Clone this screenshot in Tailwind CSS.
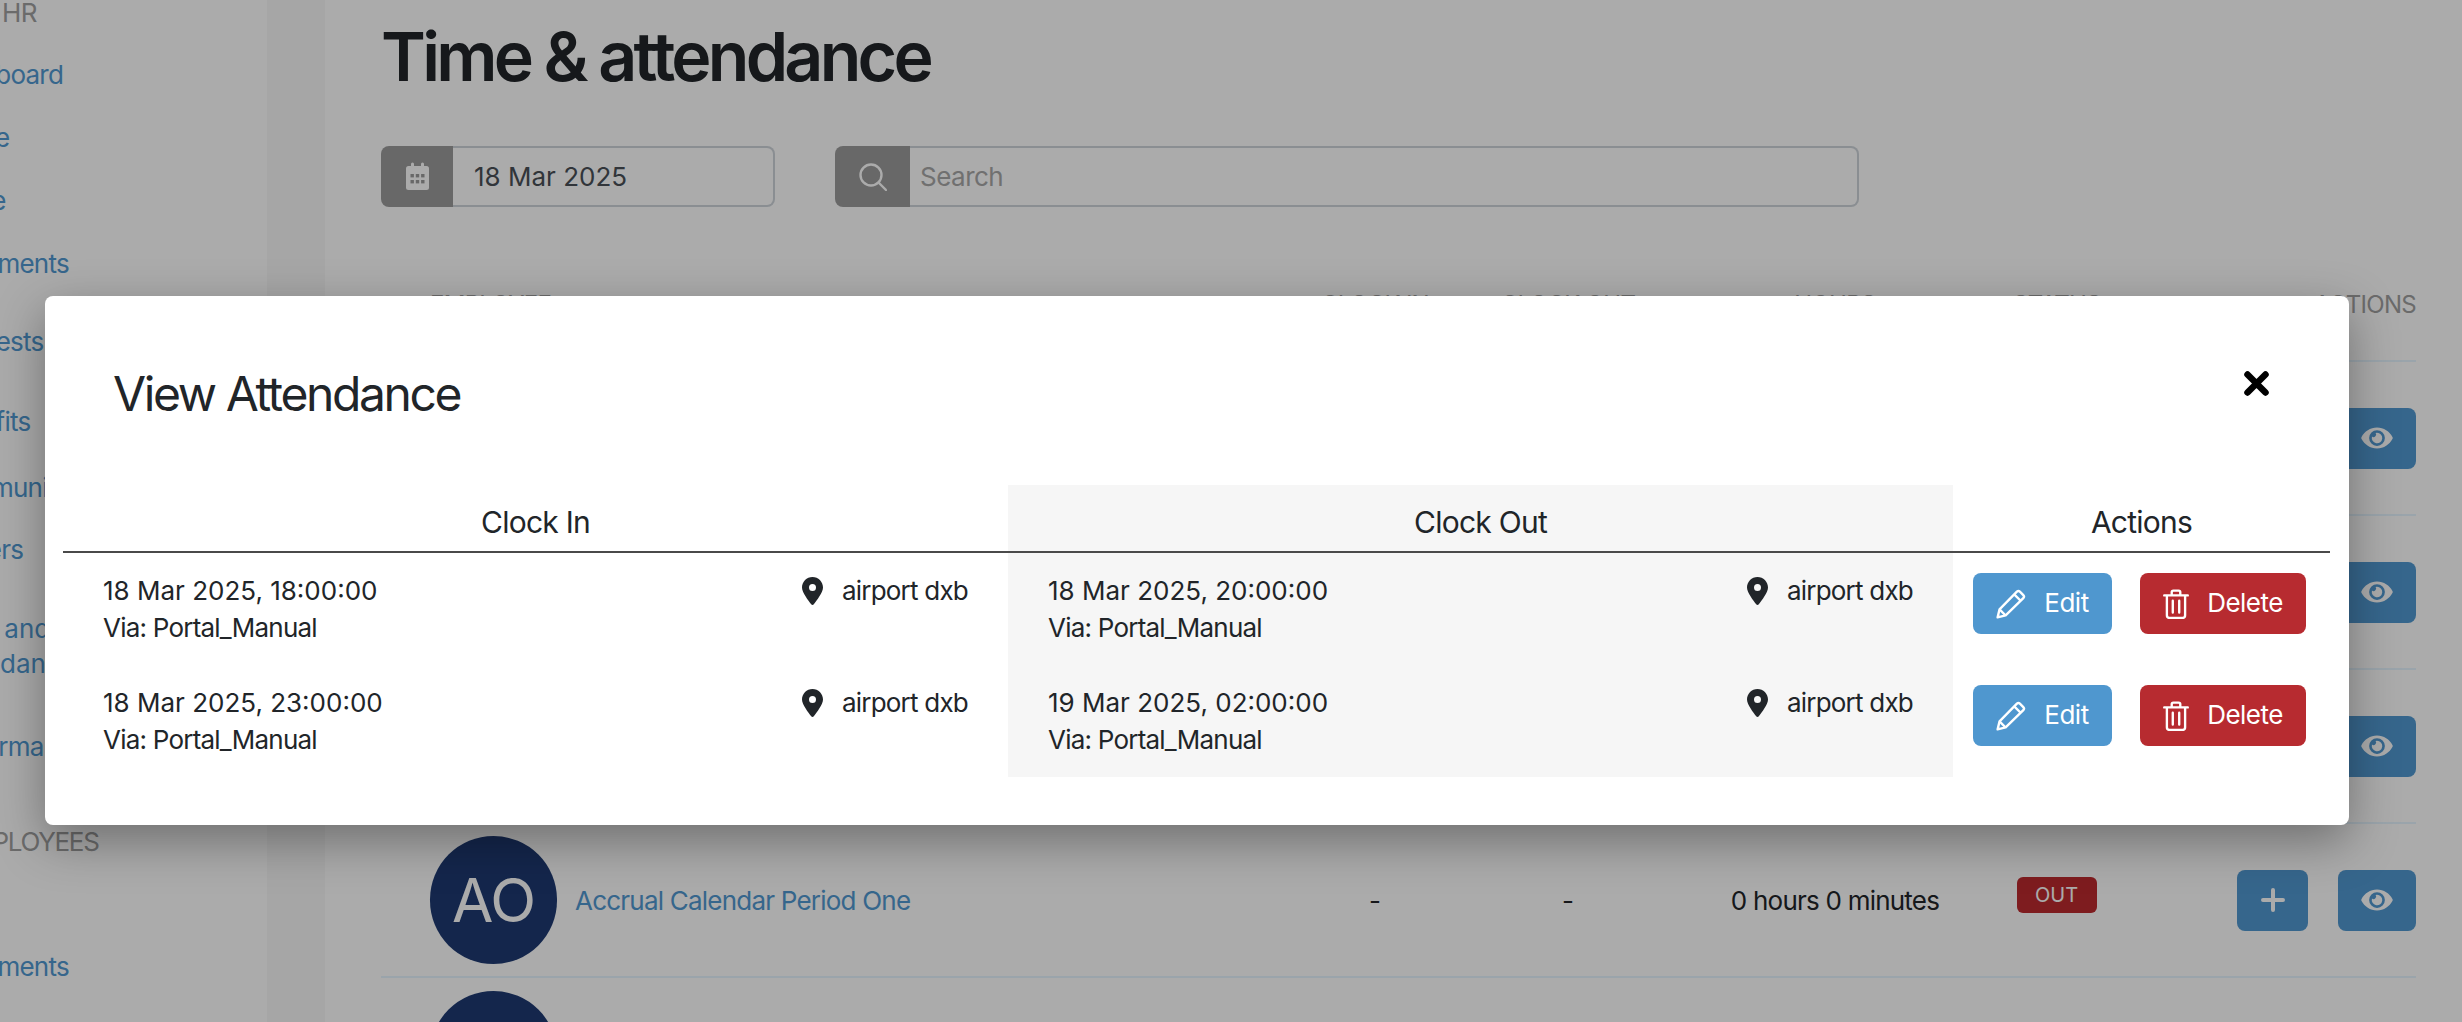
<!DOCTYPE html>
<html lang="en">
<head>
    <meta charset="UTF-8">
    <title>Time &amp; attendance</title>
    <script src="https://cdn.jsdelivr.net/npm/@tailwindcss/browser@4"></script>
</head>
<body class="w-[2462px] h-[1022px] overflow-hidden bg-white font-['Inter',sans-serif] text-[#212529]">
    <div class="flex h-[1022px] overflow-hidden">
        <!-- Sidebar, page is scrolled sideways so labels are cut off at the left -->
        <aside class="w-[267px] shrink-0 overflow-hidden bg-white">
            <div class="-ml-[64px] -mt-[3px] flex flex-col text-[26px] leading-[32px] tracking-[-0.03em] text-[#5199d1]">
                <div class="h-[62px] ml-[20px] text-[#a0a0a0]">MY HR</div>
                <a class="h-[63px]">Dashboard</a>
                <a class="h-[63px]">Profile</a>
                <a class="h-[63px]">Leave</a>
                <a class="h-[78px]">Documents</a>
                <a class="h-[80px]">Requests</a>
                <a class="h-[66px]">Benefits</a>
                <a class="h-[62px]">Communications</a>
                <a class="h-[77px]">Rosters</a>
                <a class="h-[120px] leading-[35px] tracking-normal">Time and<br>Attendance</a>
                <a class="h-[95px]">Performance</a>
                <div class="h-[125px] ml-[20px] tracking-[-0.05em] text-[#a0a0a0]">EMPLOYEES</div>
                <a>Documents</a>
            </div>
        </aside>
        <div class="w-[58px] shrink-0 bg-[#f8f8f8]"></div>

        <!-- Main -->
        <main class="w-[2035px] shrink-0 ml-[56px]">
            <h1 class="mt-[16px] text-[68px] leading-[80px] font-semibold tracking-[-0.055em] text-[#212529]">Time &amp; attendance</h1>
            <div class="mt-[50px] flex">
                <div class="flex h-[61px] w-[394px]">
                    <span class="flex w-[72px] items-center justify-center rounded-l-lg bg-[#9c9c9c]">
                        <svg class="w-[25px] h-[29px]" viewBox="0 0 25 29" fill="none"><rect x="1" y="4" width="23" height="24" rx="2.5" fill="white"/><rect x="6" y="0.5" width="3" height="6" rx="1.5" fill="white"/><rect x="16" y="0.5" width="3" height="6" rx="1.5" fill="white"/><g fill="#9c9c9c"><rect x="5.5" y="12" width="3.4" height="3.4"/><rect x="10.8" y="12" width="3.4" height="3.4"/><rect x="16.1" y="12" width="3.4" height="3.4"/><rect x="5.5" y="18" width="3.4" height="3.4"/><rect x="10.8" y="18" width="3.4" height="3.4"/><rect x="16.1" y="18" width="3.4" height="3.4"/></g></svg>
                    </span>
                    <div class="flex flex-1 items-center rounded-r-lg border-2 border-l-0 border-[#ced4da] pl-[21px] text-[26px] text-[#495057]">18 Mar 2025</div>
                </div>
                <div class="ml-[60px] flex h-[61px] w-[1024px]">
                    <span class="flex w-[75px] items-center justify-center rounded-l-lg bg-[#9c9c9c]">
                        <svg class="w-[28px] h-[28px]" viewBox="0 0 28 28" fill="none" stroke="white" stroke-width="2.4"><circle cx="12" cy="12" r="10.5"/><path d="M19.5 19.5L27 27" stroke-linecap="round"/></svg>
                    </span>
                    <div class="flex flex-1 items-center rounded-r-lg border-2 border-l-0 border-[#ced4da] pl-[10px] text-[26px] tracking-[-0.02em] text-[#a8a8a8]">Search</div>
                </div>
            </div>

            <!-- Table behind the modal -->
            <div class="mt-[84px] grid h-[27px] grid-cols-[899px_190px_196px_338px_106px_306px] text-[24px] leading-[27px] tracking-[-0.03em] text-[#a0a0a0]">
                <span class="pl-[49px]">EMPLOYEE</span>
                <span class="text-center">CLOCK IN</span>
                <span class="text-center">CLOCK OUT</span>
                <span class="text-center">HOURS</span>
                <span class="text-center">STATUS</span>
                <span class="text-right">ACTIONS</span>
            </div>
            <div class="h-[44px] border-b-2 border-[#e6f5ff]"></div>
            <div class="flex h-[154px] items-center justify-end border-b-2 border-[#e6f5ff]">
                <span class="flex h-[61px] w-[78px] items-center justify-center rounded-lg bg-[#5199d1]"><svg class="w-[32px] h-[28px]" viewBox="0 0 576 512" fill="white"><path d="M572.52 241.4C518.29 135.59 410.93 64 288 64S57.68 135.64 3.48 241.41a32.35 32.35 0 0 0 0 29.19C57.71 376.41 165.07 448 288 448s230.32-71.64 284.52-177.41a32.35 32.35 0 0 0 0-29.19zM288 400a144 144 0 1 1 144-144 143.93 143.93 0 0 1-144 144zm0-240a95.31 95.31 0 0 0-25.31 3.79 47.85 47.85 0 0 1-66.9 66.9A95.78 95.78 0 1 0 288 160z"/></svg></span>
            </div>
            <div class="flex h-[154px] items-center justify-end border-b-2 border-[#e6f5ff]">
                <span class="flex h-[61px] w-[78px] items-center justify-center rounded-lg bg-[#5199d1]"><svg class="w-[32px] h-[28px]" viewBox="0 0 576 512" fill="white"><path d="M572.52 241.4C518.29 135.59 410.93 64 288 64S57.68 135.64 3.48 241.41a32.35 32.35 0 0 0 0 29.19C57.71 376.41 165.07 448 288 448s230.32-71.64 284.52-177.41a32.35 32.35 0 0 0 0-29.19zM288 400a144 144 0 1 1 144-144 143.93 143.93 0 0 1-144 144zm0-240a95.31 95.31 0 0 0-25.31 3.79 47.85 47.85 0 0 1-66.9 66.9A95.78 95.78 0 1 0 288 160z"/></svg></span>
            </div>
            <div class="flex h-[154px] items-center justify-end border-b-2 border-[#e6f5ff]">
                <span class="flex h-[61px] w-[78px] items-center justify-center rounded-lg bg-[#5199d1]"><svg class="w-[32px] h-[28px]" viewBox="0 0 576 512" fill="white"><path d="M572.52 241.4C518.29 135.59 410.93 64 288 64S57.68 135.64 3.48 241.41a32.35 32.35 0 0 0 0 29.19C57.71 376.41 165.07 448 288 448s230.32-71.64 284.52-177.41a32.35 32.35 0 0 0 0-29.19zM288 400a144 144 0 1 1 144-144 143.93 143.93 0 0 1-144 144zm0-240a95.31 95.31 0 0 0-25.31 3.79 47.85 47.85 0 0 1-66.9 66.9A95.78 95.78 0 1 0 288 160z"/></svg></span>
            </div>
            <div class="grid h-[154px] grid-cols-[899px_190px_196px_338px_106px_306px] items-center border-b-2 border-[#e6f5ff] text-[26px]">
                <div class="flex items-center pl-[49px]">
                    <span class="flex h-[128px] w-[127px] items-center justify-center rounded-full bg-[#1e3a72] text-[60px] tracking-[-0.02em] text-white">AO</span>
                    <a class="ml-[18px] tracking-[-0.03em] text-[#5199d1]">Accrual Calendar Period One</a>
                </div>
                <span class="text-center">-</span>
                <span class="text-center">-</span>
                <span class="text-center tracking-[-0.03em]">0 hours 0 minutes</span>
                <span class="-mt-[10px] -ml-[1px] flex h-[36px] w-[80px] items-center justify-center justify-self-center rounded-md bg-[#bd2b2f] text-[20px] text-white">OUT</span>
                <div class="flex items-center justify-end gap-[30px]">
                    <span class="flex h-[61px] w-[71px] items-center justify-center rounded-lg bg-[#5199d1]"><svg class="w-[26px] h-[26px]" viewBox="0 0 26 26" fill="none" stroke="white" stroke-width="4" stroke-linecap="round"><path d="M13 3v20M3 13h20"/></svg></span>
                    <span class="flex h-[61px] w-[78px] items-center justify-center rounded-lg bg-[#5199d1]"><svg class="w-[32px] h-[28px]" viewBox="0 0 576 512" fill="white"><path d="M572.52 241.4C518.29 135.59 410.93 64 288 64S57.68 135.64 3.48 241.41a32.35 32.35 0 0 0 0 29.19C57.71 376.41 165.07 448 288 448s230.32-71.64 284.52-177.41a32.35 32.35 0 0 0 0-29.19zM288 400a144 144 0 1 1 144-144 143.93 143.93 0 0 1-144 144zm0-240a95.31 95.31 0 0 0-25.31 3.79 47.85 47.85 0 0 1-66.9 66.9A95.78 95.78 0 1 0 288 160z"/></svg></span>
                </div>
            </div>
            <div class="pl-[49px] pt-[13px]">
                <span class="block h-[128px] w-[127px] rounded-full bg-[#1e3a72]"></span>
            </div>
        </main>
    </div>

    <!-- Backdrop -->
    <div class="absolute inset-0 bg-black/33"></div>

    <!-- Modal -->
    <div class="absolute left-[45px] top-[296px] h-[529px] w-[2304px] rounded-lg bg-white px-[18px] shadow-[0_16px_48px_rgba(0,0,0,0.35)]">
        <div class="flex h-[189px] items-start justify-between pl-[50px] pr-[62px]">
            <h2 class="mt-[72px] text-[48px] leading-[52px] font-normal tracking-[-0.05em]">View Attendance</h2>
            <svg class="mt-[75px] w-[25px] h-[25px]" viewBox="0 0 25 25" fill="none" stroke="black" stroke-width="6.5" stroke-linecap="round"><path d="M3.5 3.5l18 18M21.5 3.5l-18 18"/></svg>
        </div>
        <table class="w-[2267px] table-fixed border-collapse text-[26px] leading-[36.5px]">
            <colgroup>
                <col class="w-[945px]">
                <col class="w-[945px] bg-[#f6f6f6]">
                <col class="w-[377px]">
            </colgroup>
            <thead>
                <tr class="h-[67px] border-b-2 border-[#4a4a4a] text-[30px] tracking-[-0.025em]">
                    <th class="pt-[8px] font-normal">Clock In</th>
                    <th class="pt-[8px] font-normal">Clock Out</th>
                    <th class="pt-[8px] font-normal">Actions</th>
                </tr>
            </thead>
            <tbody>
                <tr class="h-[113px] align-top">
                    <td class="px-[40px] pt-[20px]">
                        <div class="flex justify-between">
                            <div>18 Mar 2025, 18:00:00<br><span class="tracking-[-0.03em]">Via: Portal_Manual</span></div>
                            <div class="flex items-start gap-[19px]">
                                <svg class="mt-[4px] w-[21px] h-[28px]" viewBox="0 0 384 512" fill="#212529"><path d="M215.7 499.2C267 435 384 279.4 384 192C384 86 298 0 192 0S0 86 0 192c0 87.4 117 243 168.3 307.2c12.3 15.3 35.1 15.3 47.4 0zM192 128a64 64 0 1 1 0 128 64 64 0 1 1 0-128z"/></svg>
                                <span class="tracking-[-0.03em]">airport dxb</span>
                            </div>
                        </div>
                    </td>
                    <td class="px-[40px] pt-[20px]">
                        <div class="flex justify-between">
                            <div>18 Mar 2025, 20:00:00<br><span class="tracking-[-0.03em]">Via: Portal_Manual</span></div>
                            <div class="flex items-start gap-[19px]">
                                <svg class="mt-[4px] w-[21px] h-[28px]" viewBox="0 0 384 512" fill="#212529"><path d="M215.7 499.2C267 435 384 279.4 384 192C384 86 298 0 192 0S0 86 0 192c0 87.4 117 243 168.3 307.2c12.3 15.3 35.1 15.3 47.4 0zM192 128a64 64 0 1 1 0 128 64 64 0 1 1 0-128z"/></svg>
                                <span class="tracking-[-0.03em]">airport dxb</span>
                            </div>
                        </div>
                    </td>
                    <td class="pl-[20px] pt-[20px]">
                        <div class="flex gap-[28px] tracking-[-0.02em] text-white">
                            <span class="flex h-[61px] w-[139px] items-center justify-center gap-[18px] rounded-lg bg-[#4f97cf]">
                                <svg class="w-[30px] h-[30px]" viewBox="0 0 28 28" fill="none" stroke="white" stroke-width="2.2" stroke-linejoin="round"><path d="M1.5 26.5l1.8-7.5L19.5 2.5a2 2 0 0 1 2.8 0l3.2 3.2a2 2 0 0 1 0 2.8L9 24.7z"/><path d="M17 5l6 6M3.3 19l5.7 5.7"/></svg>
                                Edit
                            </span>
                            <span class="flex h-[61px] w-[166px] items-center justify-center gap-[18px] rounded-lg bg-[#b72b30]">
                                <svg class="w-[26px] h-[30px]" viewBox="0 0 24 28" fill="none" stroke="white" stroke-width="2.2" stroke-linecap="round" stroke-linejoin="round"><path d="M1 6h22M8 6V3a1.5 1.5 0 0 1 1.5-1.5h5A1.5 1.5 0 0 1 16 3v3M3.5 6v18.5A2.5 2.5 0 0 0 6 27h12a2.5 2.5 0 0 0 2.5-2.5V6M9 11v11M15 11v11"/></svg>
                                Delete
                            </span>
                        </div>
                    </td>
                </tr>
                <tr class="h-[112px] align-top">
                    <td class="px-[40px] pt-[20px]">
                        <div class="flex justify-between">
                            <div>18 Mar 2025, 23:00:00<br><span class="tracking-[-0.03em]">Via: Portal_Manual</span></div>
                            <div class="flex items-start gap-[19px]">
                                <svg class="mt-[4px] w-[21px] h-[28px]" viewBox="0 0 384 512" fill="#212529"><path d="M215.7 499.2C267 435 384 279.4 384 192C384 86 298 0 192 0S0 86 0 192c0 87.4 117 243 168.3 307.2c12.3 15.3 35.1 15.3 47.4 0zM192 128a64 64 0 1 1 0 128 64 64 0 1 1 0-128z"/></svg>
                                <span class="tracking-[-0.03em]">airport dxb</span>
                            </div>
                        </div>
                    </td>
                    <td class="px-[40px] pt-[20px]">
                        <div class="flex justify-between">
                            <div>19 Mar 2025, 02:00:00<br><span class="tracking-[-0.03em]">Via: Portal_Manual</span></div>
                            <div class="flex items-start gap-[19px]">
                                <svg class="mt-[4px] w-[21px] h-[28px]" viewBox="0 0 384 512" fill="#212529"><path d="M215.7 499.2C267 435 384 279.4 384 192C384 86 298 0 192 0S0 86 0 192c0 87.4 117 243 168.3 307.2c12.3 15.3 35.1 15.3 47.4 0zM192 128a64 64 0 1 1 0 128 64 64 0 1 1 0-128z"/></svg>
                                <span class="tracking-[-0.03em]">airport dxb</span>
                            </div>
                        </div>
                    </td>
                    <td class="pl-[20px] pt-[20px]">
                        <div class="flex gap-[28px] tracking-[-0.02em] text-white">
                            <span class="flex h-[61px] w-[139px] items-center justify-center gap-[18px] rounded-lg bg-[#4f97cf]">
                                <svg class="w-[30px] h-[30px]" viewBox="0 0 28 28" fill="none" stroke="white" stroke-width="2.2" stroke-linejoin="round"><path d="M1.5 26.5l1.8-7.5L19.5 2.5a2 2 0 0 1 2.8 0l3.2 3.2a2 2 0 0 1 0 2.8L9 24.7z"/><path d="M17 5l6 6M3.3 19l5.7 5.7"/></svg>
                                Edit
                            </span>
                            <span class="flex h-[61px] w-[166px] items-center justify-center gap-[18px] rounded-lg bg-[#b72b30]">
                                <svg class="w-[26px] h-[30px]" viewBox="0 0 24 28" fill="none" stroke="white" stroke-width="2.2" stroke-linecap="round" stroke-linejoin="round"><path d="M1 6h22M8 6V3a1.5 1.5 0 0 1 1.5-1.5h5A1.5 1.5 0 0 1 16 3v3M3.5 6v18.5A2.5 2.5 0 0 0 6 27h12a2.5 2.5 0 0 0 2.5-2.5V6M9 11v11M15 11v11"/></svg>
                                Delete
                            </span>
                        </div>
                    </td>
                </tr>
            </tbody>
        </table>
    </div>
</body>
</html>
